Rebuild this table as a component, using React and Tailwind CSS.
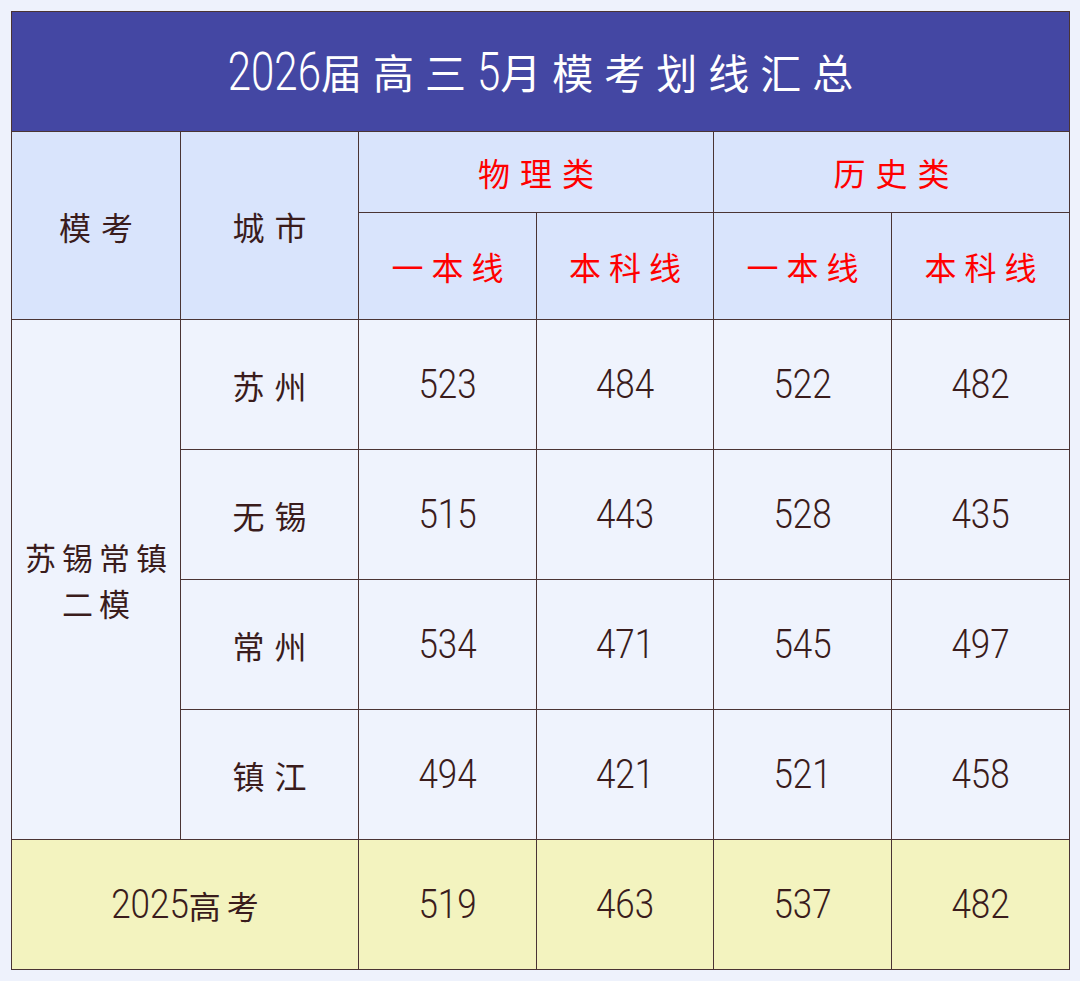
import React from "react";

const CJK = "font-['Noto_Sans_CJK_SC',sans-serif]";

function Num({ children }) {
  return (
    <span className="inline-block origin-center scale-y-[1.15] font-['Roboto',sans-serif] font-light text-[35px] leading-none text-[#3a1c1c]">
      {children}
    </span>
  );
}

function Cell({ className = "", children }) {
  return (
    <div className={"flex items-center justify-center " + className}>{children}</div>
  );
}

const rows = [
  ["苏州", "523", "484", "522", "482"],
  ["无锡", "515", "443", "528", "435"],
  ["常州", "534", "471", "545", "497"],
  ["镇江", "494", "421", "521", "458"],
];

export default function App() {
  const body = "bg-[#eff3fd]";
  const head = "bg-[#d9e4fc]";
  const yellow = "bg-[#f3f3bf]";
  return (
    <div className="min-h-[981px] w-[1080px] bg-[#eef2fc] pl-[11px] pt-[11px]">
      <div className="grid w-[1059px] grid-cols-[168px_177px_177px_176px_177px_177px] grid-rows-[119px_80px_106px_129px_129px_129px_129px_129px] gap-px border border-[#4a3434] bg-[#4a3434]">
        <Cell className="col-span-6 bg-[#4447a3]">
          <div className="flex items-center text-white">
            <span className="inline-block scale-y-[1.28] font-['Roboto',sans-serif] font-light text-[42px] leading-none">2026</span>
            <span className={CJK + " text-[41px] leading-none tracking-[11px]"}>届高三</span>
            <span className="inline-block scale-y-[1.28] font-['Roboto',sans-serif] font-light text-[42px] leading-none">5</span>
            <span className={CJK + " text-[41px] leading-none tracking-[11px] mr-[-11px]"}>月模考划线汇总</span>
          </div>
        </Cell>

        <Cell className={"row-span-2 " + head}>
          <span className={CJK + " text-[32px] tracking-[10px] mr-[-10px] text-[#3a1c1c]"}>模考</span>
        </Cell>
        <Cell className={"row-span-2 " + head}>
          <span className={CJK + " text-[32px] tracking-[10px] mr-[-10px] text-[#3a1c1c]"}>城市</span>
        </Cell>
        <Cell className={"col-span-2 " + head}>
          <span className={CJK + " text-[32px] tracking-[10px] mr-[-10px] text-[#ff0000]"}>物理类</span>
        </Cell>
        <Cell className={"col-span-2 " + head}>
          <span className={CJK + " text-[32px] tracking-[10px] mr-[-10px] text-[#ff0000]"}>历史类</span>
        </Cell>
        {["一本线", "本科线", "一本线", "本科线"].map((t, i) => (
          <Cell key={i} className={head}>
            <span className={CJK + " text-[32px] tracking-[8px] mr-[-8px] text-[#ff0000]"}>{t}</span>
          </Cell>
        ))}

        <Cell className={"row-span-4 " + body}>
          <div className={CJK + " flex flex-col items-center text-[31px] leading-[46px] text-[#3a1c1c]"}>
            <span className="tracking-[6px] mr-[-6px]">苏锡常镇</span>
            <span className="tracking-[6px] mr-[-6px]">二模</span>
          </div>
        </Cell>
        {rows.map((r, ri) => (
          <React.Fragment key={ri}>
            <Cell className={body}>
              <span className={CJK + " text-[32px] tracking-[10px] mr-[-10px] text-[#3a1c1c]"}>{r[0]}</span>
            </Cell>
            {r.slice(1).map((n, ni) => (
              <Cell key={ni} className={body}>
                <Num>{n}</Num>
              </Cell>
            ))}
          </React.Fragment>
        ))}

        <Cell className={"col-span-2 " + yellow}>
          <div className="flex items-center text-[#3a1c1c]">
            <span className="inline-block scale-y-[1.15] font-['Roboto',sans-serif] font-light text-[35px] leading-none">2025</span>
            <span className={CJK + " text-[32px] leading-none tracking-[6px] mr-[-6px]"}>高考</span>
          </div>
        </Cell>
        {["519", "463", "537", "482"].map((n, i) => (
          <Cell key={i} className={yellow}>
            <Num>{n}</Num>
          </Cell>
        ))}
      </div>
    </div>
  );
}
